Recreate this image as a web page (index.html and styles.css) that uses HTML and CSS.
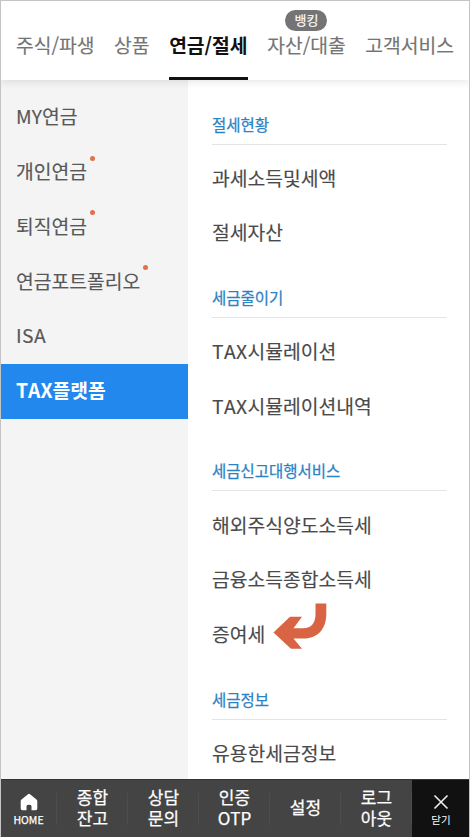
FILE: index.html
```html
<!DOCTYPE html>
<html lang="ko">
<head>
<meta charset="utf-8">
<title>연금/절세</title>
<link rel="stylesheet" href="styles.css">
</head>
<body>
<div class="app">
  <header class="tabs">
    <a class="tab">주식/파생</a>
    <a class="tab">상품</a>
    <a class="tab tab-active">연금/절세</a>
    <a class="tab">자산/대출<span class="badge">뱅킹</span></a>
    <a class="tab">고객서비스</a>
  </header>
  <main class="main">
    <nav class="side">
      <a class="side-item"><span class="label">MY연금</span></a>
      <a class="side-item"><span class="label dot">개인연금</span></a>
      <a class="side-item"><span class="label dot">퇴직연금</span></a>
      <a class="side-item"><span class="label dot">연금포트폴리오</span></a>
      <a class="side-item"><span class="label latin">ISA</span></a>
      <a class="side-item side-active"><span class="label">TAX플랫폼</span></a>
    </nav>
    <div class="content">
      <section class="group">
        <h2 class="title">절세현황</h2>
        <a class="item">과세소득및세액</a>
        <a class="item">절세자산</a>
      </section>
      <section class="group">
        <h2 class="title">세금줄이기</h2>
        <a class="item"><span><span class="latin">TAX</span>시뮬레이션</span></a>
        <a class="item"><span><span class="latin">TAX</span>시뮬레이션내역</span></a>
      </section>
      <section class="group">
        <h2 class="title">세금신고대행서비스</h2>
        <a class="item">해외주식양도소득세</a>
        <a class="item">금융소득종합소득세</a>
        <a class="item">증여세
          <svg class="arrow" width="54" height="46" viewBox="0 0 54 46"><path d="M42.500 0.500H53.300V11C53.300 26 44.500 35.500 31 35.500H20.500L29 45.700H18L0.500 29.500L17 13.700H29L20.500 25.300H30C38.500 25.300 42.500 20 42.500 11Z" fill="#d96444"/></svg>
        </a>
      </section>
      <section class="group">
        <h2 class="title">세금정보</h2>
        <a class="item">유용한세금정보</a>
      </section>
    </div>
  </main>
  <footer class="bar">
    <a class="cell home">
      <svg width="18" height="18" viewBox="0 0 18 18"><path d="M9 0.800Q9.500 0.800 10 1.200L16.500 6.600Q17.300 7.300 17.300 8.300V15.500Q17.300 17.200 15.600 17.200H11.500V13.200Q11.500 11.800 9 11.800T6.500 13.200V17.200H2.400Q0.700 17.200 0.700 15.500V8.300Q0.700 7.300 1.500 6.600L8 1.200Q8.500 0.800 9 0.800Z" fill="#fff"/></svg>
      <span class="home-label">HOME</span>
    </a>
    <a class="cell">종합<br>잔고</a>
    <a class="cell">상담<br>문의</a>
    <a class="cell">인증<br>OTP</a>
    <a class="cell">설정</a>
    <a class="cell">로그<br>아웃</a>
    <a class="cell close">
      <svg width="16" height="16" viewBox="0 0 16 16"><path d="M1.500 1.500L14.500 14.500M14.500 1.500L1.500 14.500" stroke="#eee" stroke-width="1.600" fill="none"/></svg>
      <span class="close-label">닫기</span>
    </a>
  </footer>
</div>
</body>
</html>
```

FILE: styles.css
```css
* { box-sizing: border-box; }
body {
  margin: 0;
  font-family: "Noto Sans CJK KR", sans-serif;
  font-size: 19.3px;
  font-kerning: none;
  color: #4a4a4a;
}
.app {
  height: 837px;
  display: flex;
  flex-direction: column;
  border: 1px solid #c4c4c4;
  border-bottom: 0;
  background: #fff;
  overflow: hidden;
}
.tabs {
  height: 79px;
  flex: none;
  display: flex;
  align-items: flex-end;
  justify-content: space-between;
  padding: 0 15px;
  background: #fff;
  box-shadow: 0 2px 8px rgba(0, 0, 0, 0.1);
  z-index: 1;
}
.tab {
  position: relative;
  height: 52px;
  line-height: 34px;
  color: #747474;
  white-space: nowrap;
  -webkit-text-stroke: 0.15px currentColor;
}
.tab-active {
  color: #111;
  font-weight: 700;
  border-bottom: 3px solid #111;
  -webkit-text-stroke: 0;
}
.badge {
  position: absolute;
  left: 50%;
  top: -18px;
  width: 42px;
  height: 21px;
  transform: translateX(-50%);
  border-radius: 11px;
  background: #747474;
  color: #fff;
  font-size: 13px;
  line-height: 20px;
  text-align: center;
}
.main {
  flex: 1;
  min-height: 0;
  display: flex;
}
.side {
  width: 187px;
  flex: none;
  padding-top: 10.25px;
  background: #f4f4f4;
}
.side-item {
  display: flex;
  align-items: center;
  height: 54.75px;
  padding: 0 0 2.500px 15px;
  color: #585858;
  -webkit-text-stroke: 0.15px currentColor;
}
.side-active {
  margin-left: -1px;
  padding-left: 16px;
  background: #2388ee;
  color: #fff;
  font-weight: 700;
  -webkit-text-stroke: 0;
}
.label { position: relative; }
.latin { letter-spacing: 0.4px; }
.dot::after {
  content: "";
  position: absolute;
  right: -8px;
  top: -1.500px;
  width: 5px;
  height: 5px;
  border-radius: 50%;
  background: #e2704a;
}
.content {
  flex: 1;
  padding: 6px 22px 0 24px;
}
.group { padding-top: 26.500px; }
.title {
  margin: 0 0 5.800px;
  height: 32px;
  border-bottom: 1px solid #e4e4e4;
  color: #2b82c4;
  font-size: 15.500px;
  font-weight: 400;
  line-height: 22px;
  -webkit-text-stroke: 0.25px currentColor;
}
.item {
  display: flex;
  align-items: center;
  height: 54.600px;
  -webkit-text-stroke: 0.15px currentColor;
}
.arrow {
  margin: -15px 0 0 8px;
}
.bar {
  height: 58px;
  flex: none;
  display: flex;
  margin: 0 -1px;
  border-top: 1px solid #333;
  background: #444;
  color: #fff;
  font-size: 17px;
  line-height: 21px;
  text-align: center;
  -webkit-text-stroke: 0.25px currentColor;
}
.cell {
  width: 71px;
  display: flex;
  align-items: center;
  justify-content: center;
  padding-bottom: 4px;
  background: linear-gradient(#4d4d4d, #4d4d4d) right center / 1px 32px no-repeat;
}
.home {
  width: 57px;
  flex-direction: column;
  padding: 3px 0 0;
}
.home-label {
  font-size: 10.500px;
  line-height: 15px;
  margin-top: 1px;
}
.close {
  width: 58px;
  flex-direction: column;
  padding: 4px 0 0;
  background: #111;
}
.close-label {
  font-size: 10.500px;
  line-height: 15px;
  margin-top: 2px;
  -webkit-text-stroke: 0;
}
```
